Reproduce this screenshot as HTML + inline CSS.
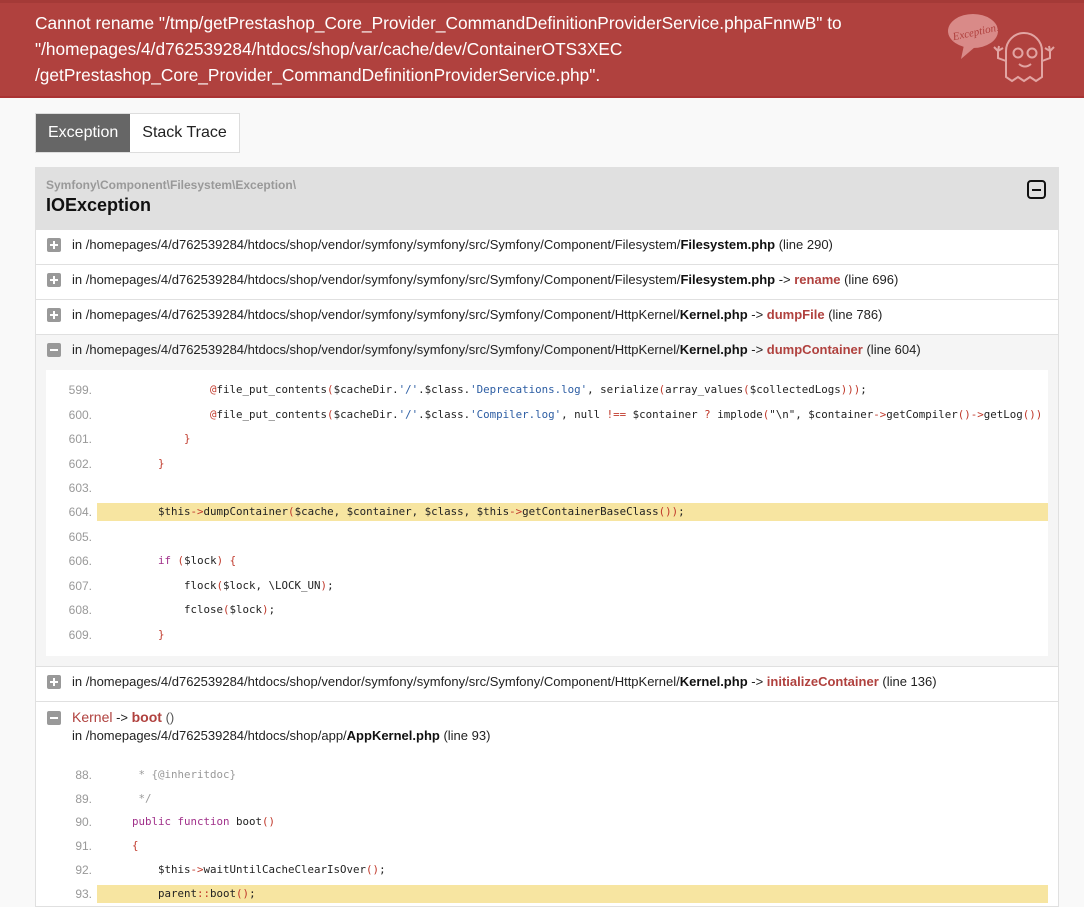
<!DOCTYPE html>
<html><head><meta charset="utf-8"><style>
*{margin:0;padding:0;box-sizing:border-box}
body{width:1084px;height:904px;overflow:hidden;background:#f9f9f9;font-family:"Liberation Sans",sans-serif;color:#222}
.hdr{position:absolute;left:0;top:0;width:1084px;height:98px;background:#b0413e;border-top:3px solid #a43a37;border-bottom:2px solid #a33;}
.hdr p{position:absolute;left:35px;top:7px;color:#fff;font-size:17.3px;line-height:26px;width:880px}
.logo{position:absolute;left:944px;top:6px}
.tabs{position:absolute;left:35px;top:113px;height:40px;display:flex;border:1px solid #ddd;background:#fff}
.tabs div{padding:0 12px;line-height:38px;font-size:16px;color:#222}
.tabs .on{background:#666;color:#fff}
.box{position:absolute;left:35px;top:167px;width:1024px;border:1px solid #e0e0e0;background:#fff}
.bh{background:#e0e0e0;height:61px;position:relative;padding:10px 10px}
.ns{font-size:12px;font-weight:bold;color:#999;line-height:14px}
.cls{font-size:18px;font-weight:bold;line-height:26px;color:#111}
.tog{position:absolute;right:12px;top:12px;width:19px;height:19px;border:2px solid #111;border-radius:4px}
.tog:after{content:"";position:absolute;left:3px;right:3px;top:7px;height:2px;background:#111}
.row{border-top:1px solid #e0e0e0;height:35px;padding-left:36px;font-size:13px;line-height:30px;position:relative;color:#222}
.row.g{background:#f5f5f5}
.ic{position:absolute;left:11px;top:8px;width:14px;height:14px;background:#999;border-radius:2px}
.ic:before{content:"";position:absolute;left:3px;right:3px;top:6px;height:2px;background:#fff}
.ic.p:after{content:"";position:absolute;top:3px;bottom:3px;left:6px;width:2px;background:#fff}
b{color:#111}
.fn{color:#b0413e;font-weight:bold}
.code{background:#f5f5f5;padding:1px 10px 10px 10px}
.cw{background:#fff;padding:8px 0 9px 0;font-family:"DejaVu Sans Mono","Liberation Mono",monospace;font-size:10.8px}
.ln{display:flex;height:24.45px;align-items:center}
.ln .n{width:51px;text-align:right;color:#999;font-family:"Liberation Sans",sans-serif;font-size:12px;padding-right:5px}
.ln pre{flex:1;font:inherit;height:18px;line-height:18px;padding-left:9px;white-space:pre;overflow:hidden;color:#222}
.ln.hl pre{background:#f7e5a1}
.b2 .ln{height:23.8px}
.k{color:#a0308a}.s{color:#2c5da3}.o{color:#c0392b}.c{color:#999}
</style></head><body>
<div class="hdr"><p>Cannot rename "/tmp/getPrestashop_Core_Provider_CommandDefinitionProviderService.phpaFnnwB" to "/homepages/4/d762539284/htdocs/shop/var/cache/dev/ContainerOTS3XEC /getPrestashop_Core_Provider_CommandDefinitionProviderService.php".</p>
<svg class="logo" width="120" height="80" viewBox="0 0 120 80"><ellipse cx="29" cy="22" rx="25" ry="17" fill="#d98a88"/><path d="M20 36 L17 50 L31 38Z" fill="#d98a88"/><text x="8" y="27" font-family="Liberation Serif,serif" font-style="italic" font-size="11" fill="#b0413e" transform="rotate(-12 29 22)">Exception!</text><g fill="none" stroke="#e2a5a3" stroke-width="2"><path d="M62 68 V42 a18 18 0 0 1 36 0 V68 l-6 4 -6 -4 -6 4 -6 -4 -6 4Z"/><circle cx="74" cy="44" r="4.5"/><circle cx="88" cy="44" r="4.5"/><path d="M75 55 q6 5 12 0"/><path d="M62 52 l-8 -3 v-7 M54 42 l-4 -4 M54 42 l1 -5 M54 42 l5 -3"/><path d="M98 52 l8 -3 v-7 M106 42 l-1 -5 M106 42 l4 -4 M106 42 l-5 -3"/></g></svg>
</div>
<div class="tabs"><div class="on">Exception</div><div>Stack Trace</div></div>
<div class="box">
<div class="bh"><div class="ns">Symfony\Component\Filesystem\Exception\</div><div class="cls">IOException</div><div class="tog"></div></div>
<div class="row"><span class="ic p"></span>in /homepages/4/d762539284/htdocs/shop/vendor/symfony/symfony/src/Symfony/Component/Filesystem/<b>Filesystem.php</b> (line 290)</div>
<div class="row"><span class="ic p"></span>in /homepages/4/d762539284/htdocs/shop/vendor/symfony/symfony/src/Symfony/Component/Filesystem/<b>Filesystem.php</b> -&gt; <span class="fn">rename</span> (line 696)</div>
<div class="row"><span class="ic p"></span>in /homepages/4/d762539284/htdocs/shop/vendor/symfony/symfony/src/Symfony/Component/HttpKernel/<b>Kernel.php</b> -&gt; <span class="fn">dumpFile</span> (line 786)</div>
<div class="row g"><span class="ic"></span>in /homepages/4/d762539284/htdocs/shop/vendor/symfony/symfony/src/Symfony/Component/HttpKernel/<b>Kernel.php</b> -&gt; <span class="fn">dumpContainer</span> (line 604)</div>
<div class="code"><div class="cw">
<div class="ln"><span class="n">599.</span><pre>                <span class="o">@</span>file_put_contents<span class="o">(</span>$cacheDir.<span class="s">'/'</span>.$class.<span class="s">'Deprecations.log'</span>, serialize<span class="o">(</span>array_values<span class="o">(</span>$collectedLogs<span class="o">)))</span>;</pre></div>
<div class="ln"><span class="n">600.</span><pre>                <span class="o">@</span>file_put_contents<span class="o">(</span>$cacheDir.<span class="s">'/'</span>.$class.<span class="s">'Compiler.log'</span>, null <span class="o">!==</span> $container <span class="o">?</span> implode<span class="o">(</span>"\n", $container<span class="o">-&gt;</span>getCompiler<span class="o">()-&gt;</span>getLog<span class="o">())</span></pre></div>
<div class="ln"><span class="n">601.</span><pre>            <span class="o">}</span></pre></div>
<div class="ln"><span class="n">602.</span><pre>        <span class="o">}</span></pre></div>
<div class="ln"><span class="n">603.</span><pre> </pre></div>
<div class="ln hl"><span class="n">604.</span><pre>        $this<span class="o">-&gt;</span>dumpContainer<span class="o">(</span>$cache, $container, $class, $this<span class="o">-&gt;</span>getContainerBaseClass<span class="o">())</span>;</pre></div>
<div class="ln"><span class="n">605.</span><pre> </pre></div>
<div class="ln"><span class="n">606.</span><pre>        <span class="k">if</span> <span class="o">(</span>$lock<span class="o">)</span> <span class="o">{</span></pre></div>
<div class="ln"><span class="n">607.</span><pre>            flock<span class="o">(</span>$lock, \LOCK_UN<span class="o">)</span>;</pre></div>
<div class="ln"><span class="n">608.</span><pre>            fclose<span class="o">(</span>$lock<span class="o">)</span>;</pre></div>
<div class="ln"><span class="n">609.</span><pre>        <span class="o">}</span></pre></div>
</div></div>
<div class="row"><span class="ic p"></span>in /homepages/4/d762539284/htdocs/shop/vendor/symfony/symfony/src/Symfony/Component/HttpKernel/<b>Kernel.php</b> -&gt; <span class="fn">initializeContainer</span> (line 136)</div>
<div class="row" style="height:auto;line-height:18px;padding-top:6px;padding-bottom:16px"><span class="ic" style="top:9px"></span><span style="color:#b0413e;font-size:14px">Kernel</span> -&gt; <span class="fn" style="font-size:14px">boot</span> <span style="color:#555">()</span><br>in /homepages/4/d762539284/htdocs/shop/app/<b>AppKernel.php</b> (line 93)</div>
<div class="cw b2" style="padding:2px 10px 0 10px;">
<div class="ln"><span class="n">88.</span><pre><span class="c">     * {@inheritdoc}</span></pre></div>
<div class="ln"><span class="n">89.</span><pre><span class="c">     */</span></pre></div>
<div class="ln"><span class="n">90.</span><pre>    <span class="k">public function</span> boot<span class="o">()</span></pre></div>
<div class="ln"><span class="n">91.</span><pre>    <span class="o">{</span></pre></div>
<div class="ln"><span class="n">92.</span><pre>        $this<span class="o">-&gt;</span>waitUntilCacheClearIsOver<span class="o">()</span>;</pre></div>
<div class="ln hl"><span class="n">93.</span><pre>        parent<span class="o">::</span>boot<span class="o">()</span>;</pre></div>
</div>
</div>
</body></html>
